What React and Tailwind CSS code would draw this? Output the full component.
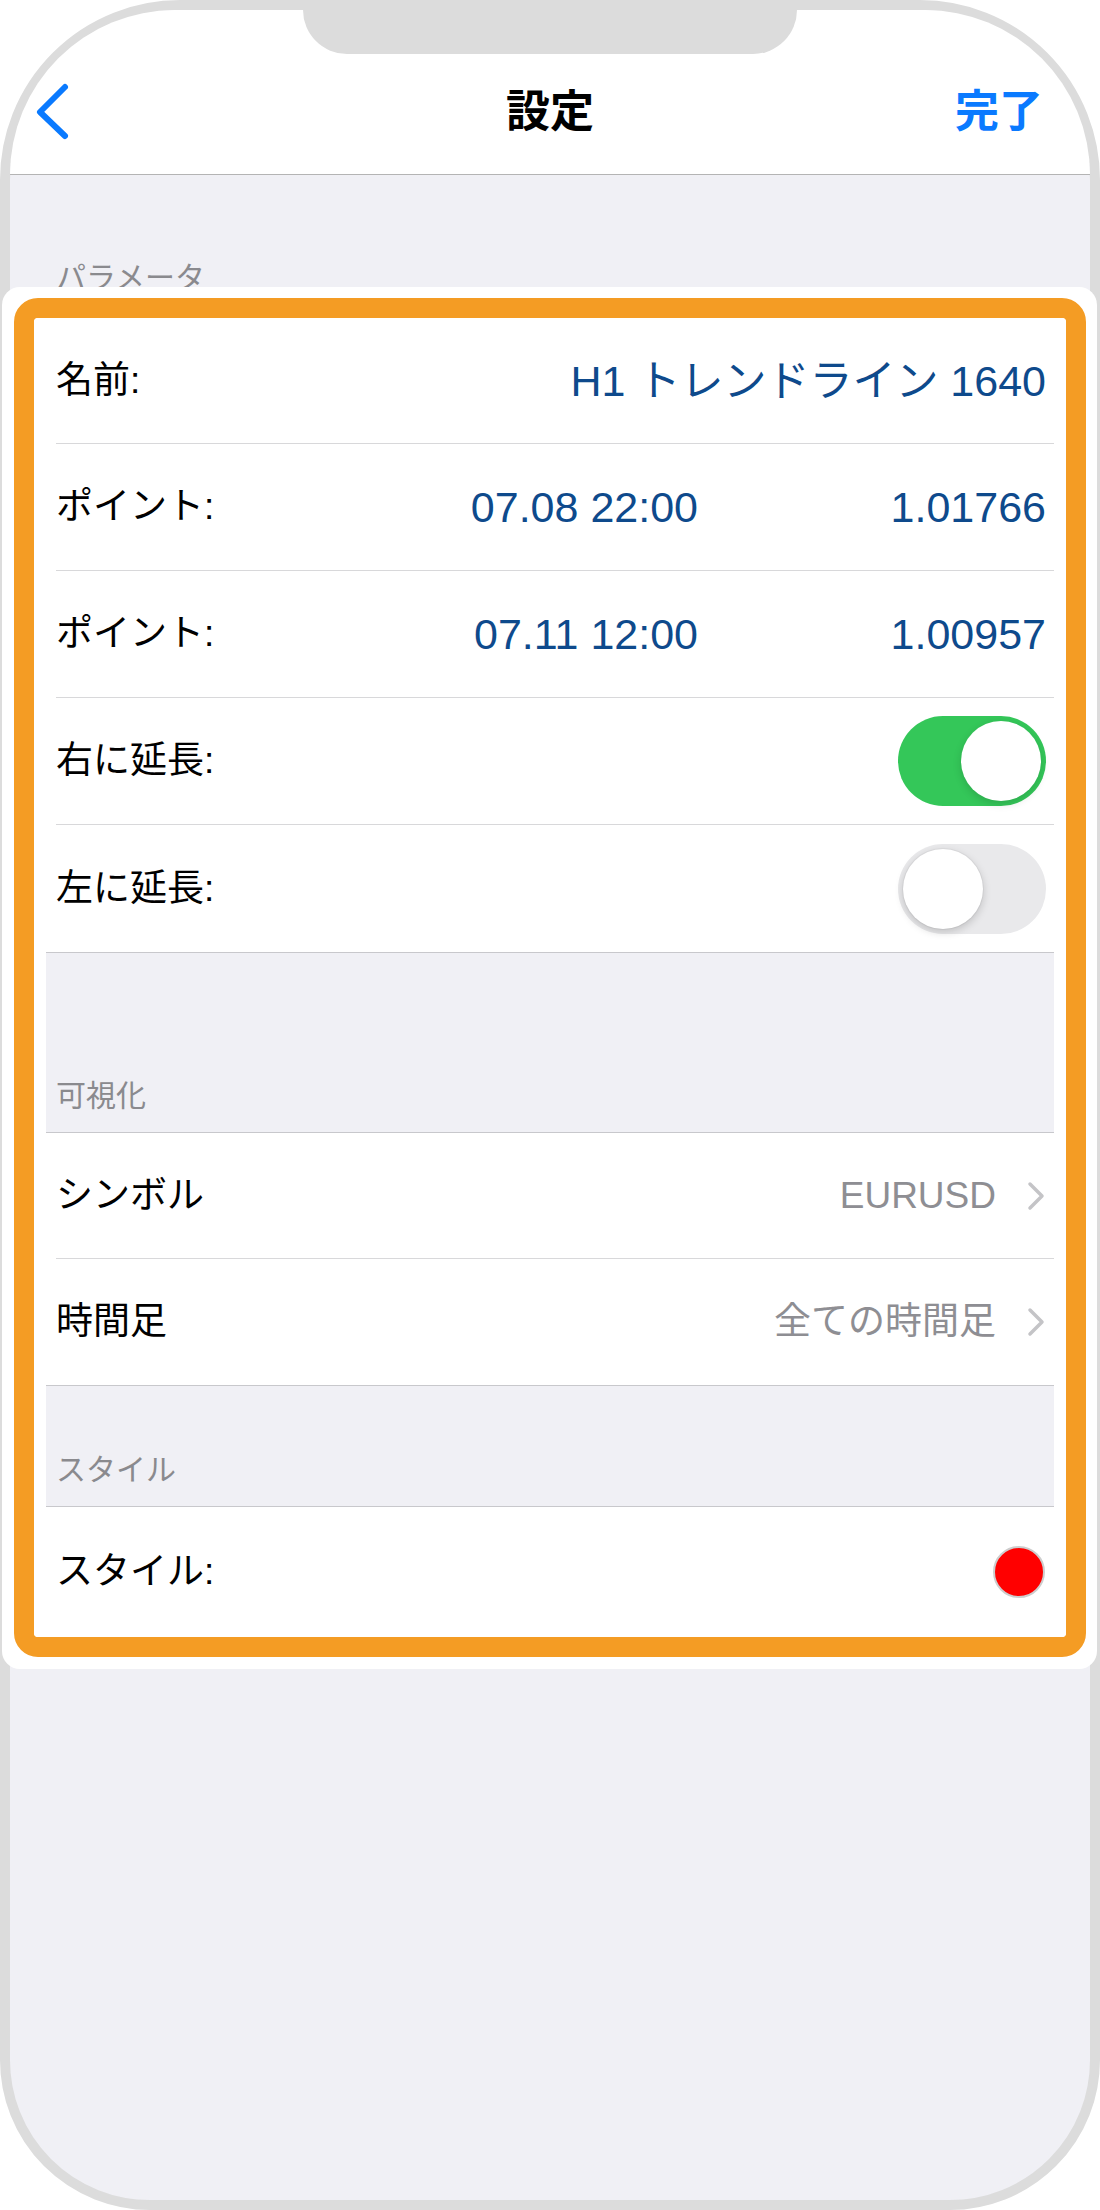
import React from "react";

function Chevron() {
  return (
    <svg className="ml-[30px] shrink-0" width="20" height="30" viewBox="0 0 20 30">
      <path d="M4 3 L16 15 L4 27" fill="none" stroke="#c4c4c7" strokeWidth="3.5" strokeLinecap="round" strokeLinejoin="round" />
    </svg>
  );
}

function Toggle({ on }) {
  return on ? (
    <div className="w-[148px] h-[90px] rounded-full bg-[#34c759] p-[5px] flex justify-end shrink-0">
      <div className="w-[80px] h-[80px] rounded-full bg-white shadow-[0_3px_8px_rgba(0,0,0,0.15)]" />
    </div>
  ) : (
    <div className="w-[148px] h-[90px] rounded-full bg-[#e9e9eb] p-[5px] flex justify-start shrink-0">
      <div className="w-[80px] h-[80px] rounded-full bg-white shadow-[0_3px_8px_rgba(0,0,0,0.18),0_0_0_1px_rgba(0,0,0,0.04)]" />
    </div>
  );
}

export default function App() {
  return (
    <div className="w-[1100px] h-[2210px] bg-white font-['Liberation_Sans','Noto_Sans_CJK_JP',sans-serif]">
      <div className="relative w-full h-full border-[10px] border-[#dcdcdc] rounded-t-[180px] rounded-b-[150px] bg-[#f0f0f5]">
        <nav className="h-[165px] bg-white rounded-t-[170px] border-b border-[#b4b4b4] pt-[40px] flex items-center">
          <div className="w-full grid grid-cols-[1fr_auto_1fr] items-center">
            <div>
              <svg className="ml-[20px]" width="44" height="60" viewBox="0 0 44 60">
                <path d="M35 5 L10 30 L35 54" fill="none" stroke="#0a7aff" strokeWidth="6" strokeLinecap="round" strokeLinejoin="round" />
              </svg>
            </div>
            <div className="text-[44px] leading-[60px] font-bold text-black">設定</div>
            <div className="text-right pr-[47px] text-[44px] leading-[60px] font-bold text-[#0a7aff]">完了</div>
          </div>
        </nav>

        <div className="h-[112px] overflow-hidden pl-[46px] pt-[83px] text-[30px] leading-[40px] text-[#8a8a8e]">パラメータ</div>

        <div className="-ml-[8px] w-[1095px] h-[1382px] bg-white rounded-[18px] pl-[12px] pr-[11px] pt-[11px] pb-[12px]">
          <div className="h-full border-[20px] border-[#f49c24] rounded-[24px] bg-white">
            <div className="h-full rounded-[4px] bg-white px-[12px] overflow-hidden flex flex-col">
              {/* 名前 */}
              <div className="h-[126px] pl-[10px] flex shrink-0">
                <div className="flex-1 flex items-center pr-[8px] border-b border-[#d8d8da]">
                  <span className="flex-1 text-[37px] leading-[50px] text-black">名前:</span>
                  <span className="text-[43px] leading-[50px] text-[#0e4a8c]">H1 トレンドライン 1640</span>
                </div>
              </div>
              {/* ポイント 1 */}
              <div className="h-[127px] pl-[10px] flex shrink-0">
                <div className="flex-1 flex items-center pr-[8px] border-b border-[#d8d8da]">
                  <span className="flex-1 text-[37px] leading-[50px] text-black">ポイント:</span>
                  <span className="text-[43px] leading-[50px] text-[#0e4a8c]">07.08 22:00</span>
                  <span className="w-[348px] text-right text-[43px] leading-[50px] text-[#0e4a8c]">1.01766</span>
                </div>
              </div>
              {/* ポイント 2 */}
              <div className="h-[127px] pl-[10px] flex shrink-0">
                <div className="flex-1 flex items-center pr-[8px] border-b border-[#d8d8da]">
                  <span className="flex-1 text-[37px] leading-[50px] text-black">ポイント:</span>
                  <span className="text-[43px] leading-[50px] text-[#0e4a8c]">07.11 12:00</span>
                  <span className="w-[348px] text-right text-[43px] leading-[50px] text-[#0e4a8c]">1.00957</span>
                </div>
              </div>
              {/* 右に延長 */}
              <div className="h-[127px] pl-[10px] flex shrink-0">
                <div className="flex-1 flex items-center pr-[8px] border-b border-[#d8d8da]">
                  <span className="flex-1 text-[37px] leading-[50px] text-black">右に延長:</span>
                  <Toggle on />
                </div>
              </div>
              {/* 左に延長 */}
              <div className="h-[127px] pl-[10px] flex shrink-0">
                <div className="flex-1 flex items-center pr-[8px]">
                  <span className="flex-1 text-[37px] leading-[50px] text-black">左に延長:</span>
                  <Toggle on={false} />
                </div>
              </div>

              {/* 可視化 header */}
              <div className="h-[181px] shrink-0 bg-[#f0f0f5] border-y border-[#c8c8cc] flex items-end pl-[10px] pb-[16px]">
                <span className="text-[30px] leading-[40px] text-[#8a8a8e]">可視化</span>
              </div>

              {/* シンボル */}
              <div className="h-[126px] pl-[10px] flex shrink-0">
                <div className="flex-1 flex items-center pr-[8px] border-b border-[#d8d8da]">
                  <span className="flex-1 text-[37px] leading-[50px] text-black">シンボル</span>
                  <span className="text-[37px] leading-[50px] text-[#8e8e93]">EURUSD</span>
                  <Chevron />
                </div>
              </div>
              {/* 時間足 */}
              <div className="h-[126px] pl-[10px] flex shrink-0">
                <div className="flex-1 flex items-center pr-[8px]">
                  <span className="flex-1 text-[37px] leading-[50px] text-black">時間足</span>
                  <span className="text-[37px] leading-[50px] text-[#8e8e93]">全ての時間足</span>
                  <Chevron />
                </div>
              </div>

              {/* スタイル header */}
              <div className="h-[122px] shrink-0 bg-[#f0f0f5] border-y border-[#c8c8cc] flex items-end pl-[10px] pb-[16px]">
                <span className="text-[30px] leading-[40px] text-[#8a8a8e]">スタイル</span>
              </div>

              {/* スタイル row */}
              <div className="h-[130px] pl-[10px] flex shrink-0">
                <div className="flex-1 flex items-center pr-[9px]">
                  <span className="flex-1 text-[37px] leading-[50px] text-black">スタイル:</span>
                  <div className="w-[52px] h-[52px] rounded-full bg-[#ff0000] border-2 border-[#cdcdcd]" />
                </div>
              </div>
            </div>
          </div>
        </div>

        <div className="absolute top-0 left-[293px] w-[494px] h-[44px] bg-[#dcdcdc] rounded-b-[44px]" />
      </div>
    </div>
  );
}
